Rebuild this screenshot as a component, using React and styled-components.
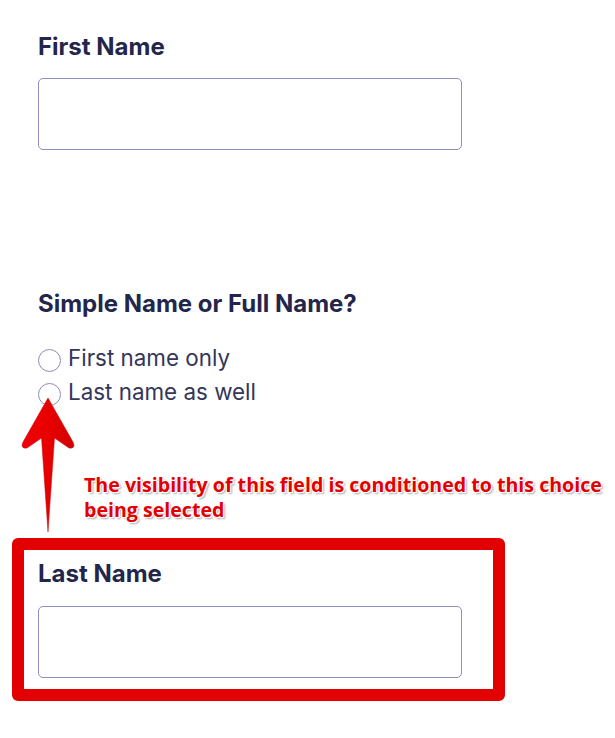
import React from 'react';
import styled, { createGlobalStyle } from 'styled-components';

const GlobalStyle = createGlobalStyle`
  html, body {
    margin: 0;
    padding: 0;
    background: #fff;
  }
  body {
    font-family: Inter, "Noto Sans", sans-serif;
  }
`;

const Form = styled.div`
  width: 615px;
  padding: 32px 12px 0;
  box-sizing: border-box;
`;

const Field = styled.div`
  padding-left: 26px;
  margin-bottom: ${p => p.gap || 0}px;
`;

const Highlight = styled.div`
  width: 493px;
  box-sizing: border-box;
  border: 12px solid #e30000;
  border-radius: 6px;
  padding: 9px 31px 11px 14px;
`;

const Label = styled.div`
  font-size: 24px;
  font-weight: 700;
  line-height: 29px;
  color: #23264a;
  margin-bottom: ${p => p.gap || 17}px;
`;

const Input = styled.input`
  display: block;
  width: 424px;
  height: 72px;
  box-sizing: border-box;
  border: 1px solid #8f8fc0;
  border-radius: 5px;
  background: #fff;
  outline: none;
`;

const RadioRow = styled.label`
  display: flex;
  align-items: center;
  gap: 7px;
  height: 34px;
  padding-bottom: 5px;
  box-sizing: border-box;
  font-size: 22.4px;
  color: #34365a;
`;

const Circle = styled.span`
  width: 23px;
  height: 23px;
  box-sizing: border-box;
  border: 1px solid #8c8cb6;
  border-radius: 50%;
  margin-top: 5px;
  flex-shrink: 0;
`;

const Annotation = styled.div`
  position: relative;
  height: 127px;
  padding: 61px 0 0 72px;
  box-sizing: border-box;
`;

const Arrow = styled.svg`
  position: absolute;
  left: 8px;
  top: -13px;
`;

const Note = styled.div`
  font-family: "Open Sans", sans-serif;
  font-weight: 700;
  font-size: 19.6px;
  line-height: 25px;
  color: #e40000;
  white-space: nowrap;
  text-shadow: 1px 0 0 #fff, -1px 0 0 #fff, 0 1px 0 #fff, 0 -1px 0 #fff,
    1px 1px 0 #fff, 2px 2px 2px rgba(0, 0, 0, 0.35);
`;

export default function App() {
  return (
    <>
      <GlobalStyle />
      <Form>
        <Field gap={139}>
          <Label>First Name</Label>
          <Input type="text" />
        </Field>
        <Field>
          <Label gap={25}>Simple Name or Full Name?</Label>
          <RadioRow>
            <Circle />
            First name only
          </RadioRow>
          <RadioRow>
            <Circle />
            Last name as well
          </RadioRow>
        </Field>
        <Annotation>
          <Arrow width="60" height="140" viewBox="0 0 60 140">
            <defs>
              <linearGradient id="ar" x1="0" x2="1">
                <stop offset="0" stopColor="#f00008" />
                <stop offset="0.5" stopColor="#e80000" />
                <stop offset="1" stopColor="#d20000" />
              </linearGradient>
            </defs>
            <path
              d="M28 0 L53 44 Q56 51 49 50 L34.5 40 L28 134 L21.5 40 L7 50 Q0 51 3 44 Z"
              fill="url(#ar)"
              stroke="#c80000"
              strokeWidth="0.5"
              strokeLinejoin="round"
            />
          </Arrow>
          <Note>
            The visibility of this field is conditioned to this choice
            <br />
            being selected
          </Note>
        </Annotation>
        <Highlight>
          <Label gap={18}>Last Name</Label>
          <Input type="text" />
        </Highlight>
      </Form>
    </>
  );
}
